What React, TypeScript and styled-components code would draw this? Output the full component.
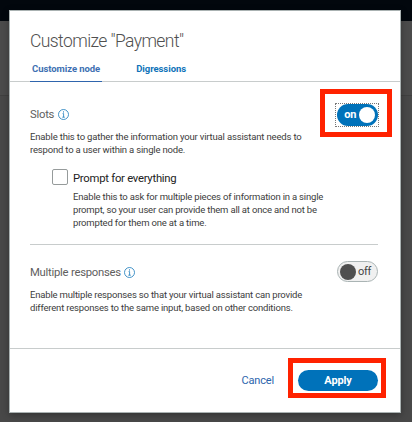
import React from 'react';
import styled, { createGlobalStyle } from 'styled-components';

const GlobalStyle = createGlobalStyle`
  * { box-sizing: border-box; }
  body {
    margin: 0;
    overflow: hidden;
    background: #4a4a4a;
    font-family: Roboto, "Liberation Sans", sans-serif;
  }
`;

const Page = styled.div`
  height: 422px;
  padding: 10px 11px 9px 9px;
  background: linear-gradient(#02070d 0 21px, #4b4b4b 21px 95px, #404040 95px 96px, #484848 96px);
`;

const Dialog = styled.section`
  position: relative;
  display: flex;
  flex-direction: column;
  width: 392px;
  height: 403px;
  border: 1px solid #aab2b2;
  background: #fff;
  box-shadow: 0 2px 7px rgba(0, 0, 0, 0.3);
`;

const Header = styled.header`
  height: 71px;
  padding: 18px 20px 0;
  border-bottom: 1px solid #c8cccc;
`;

const Title = styled.h1`
  margin: 0;
  font-size: 17.5px;
  font-weight: 300;
  line-height: 24px;
  letter-spacing: -0.58px;
  color: #505050;
`;

const Tabs = styled.nav`
  display: flex;
  gap: 32px;
  margin-top: 8px;
`;

const Tab = styled.button<{ $active?: boolean }>`
  height: 21px;
  padding: 0 2px 4px;
  border: 0;
  border-bottom: 1px solid ${(p) => (p.$active ? '#2f65ad' : 'transparent')};
  background: none;
  color: ${(p) => (p.$active ? '#3d70b2' : '#0f73b9')};
  font: 700 9.5px/16px Roboto, sans-serif;
  letter-spacing: -0.06px;
  white-space: nowrap;
`;

const Body = styled.main`
  flex: 1;
  padding: 21px 22px 0 20px;
`;

const Setting = styled.section`
  display: flex;
  justify-content: space-between;
`;

const SettingHeading = styled.h2`
  display: flex;
  align-items: center;
  gap: 3.5px;
  height: 20px;
  margin: 1px 0 6px;
  font-size: 11.3px;
  font-weight: 400;
  letter-spacing: -0.25px;
  color: #5e5e5e;
`;

const Text = styled.p`
  margin: 0;
  font-size: 9.5px;
  line-height: 13px;
  color: #3c3c3c;
`;

const Line = styled.span<{ $track?: number }>`
  display: block;
  white-space: nowrap;
  letter-spacing: ${(p) => p.$track ?? -0.18}px;
`;

const Option = styled.div`
  display: grid;
  grid-template-columns: 16px auto;
  column-gap: 5px;
  margin: 13px 0 0 22px;
`;

const Checkbox = styled.span`
  width: 16px;
  height: 16px;
  border: 1px solid #969b9b;
  border-radius: 2px;
`;

const OptionLabel = styled.label`
  height: 21px;
  font-size: 11.3px;
  line-height: 19px;
  letter-spacing: -0.26px;
  color: #222;
`;

const OptionText = styled(Text)`
  grid-column: 2;
`;

const Divider = styled.hr`
  height: 1px;
  margin: 15px 0 16px;
  border: 0;
  background: #c8cccc;
`;

const Switch = styled.button<{ $on?: boolean }>`
  display: flex;
  flex-direction: ${(p) => (p.$on ? 'row' : 'row-reverse')};
  align-items: center;
  justify-content: flex-end;
  gap: ${(p) => (p.$on ? 3 : 2)}px;
  width: 41px;
  height: ${(p) => (p.$on ? 22 : 21)}px;
  padding: 0 ${(p) => (p.$on ? 3 : 2)}px;
  border: ${(p) => (p.$on ? '0' : '1px solid #aab4b4')};
  border-radius: 11px;
  background: ${(p) => (p.$on ? '#0072ba' : '#f0f0f0')};
  color: ${(p) => (p.$on ? '#fff' : '#444')};
  font: ${(p) => (p.$on ? 700 : 400)} 11px/18px Roboto, sans-serif;
  letter-spacing: -0.35px;
`;

const OffSwitch = styled(Switch)`
  justify-content: flex-end;
`;

const FocusRing = styled.div`
  align-self: flex-start;
  width: 44px;
  height: 24px;
  margin-right: -1px;
  padding: 0 0 0 1px;
  border: 1px dotted #777;
`;

const Knob = styled.span<{ $on?: boolean }>`
  flex: none;
  width: 16px;
  height: 16px;
  border-radius: 50%;
  background: ${(p) => (p.$on ? '#fff' : '#4f4f4f')};
`;

const Footer = styled.footer`
  display: flex;
  justify-content: flex-end;
  gap: 24px;
  height: 64px;
  padding: 21px 22px 0;
  border-top: 1px solid #c8cccc;
`;

const Action = styled.button<{ $primary?: boolean }>`
  width: ${(p) => (p.$primary ? '80px' : 'auto')};
  height: 21px;
  padding: 0;
  border: 0;
  border-radius: 11px;
  background: ${(p) => (p.$primary ? '#0072ba' : 'none')};
  color: ${(p) => (p.$primary ? '#fff' : '#2b65ad')};
  font: ${(p) => (p.$primary ? 700 : 400)} 11px/21px Roboto, sans-serif;
  letter-spacing: -0.15px;
`;

const Highlight = styled.div<{ $x: number; $y: number; $w: number; $h: number }>`
  position: absolute;
  left: ${(p) => p.$x}px;
  top: ${(p) => p.$y}px;
  width: ${(p) => p.$w}px;
  height: ${(p) => p.$h}px;
  border: 5px solid #ff2200;
  pointer-events: none;
`;

const InfoIcon = () => (
  <svg width="11" height="11" viewBox="0 0 11 11" fill="none" stroke="#1779ba" strokeWidth="0.8">
    <circle cx="5.5" cy="5.5" r="5" />
    <path d="M4.6 4.6h1v3.6M4.3 8.2h2.5" />
    <path d="M5.5 2.4v1.1" strokeWidth="1" />
  </svg>
);

export default function App() {
  return (
    <>
      <GlobalStyle />
      <Page>
        <Dialog>
          <Header>
            <Title>Customize "Payment"</Title>
            <Tabs>
              <Tab $active>Customize node</Tab>
              <Tab>Digressions</Tab>
            </Tabs>
          </Header>
          <Body>
            <Setting>
              <div>
                <SettingHeading>
                  Slots <InfoIcon />
                </SettingHeading>
                <Text>
                  <Line $track={-0.165}>Enable this to gather the information your virtual assistant needs to</Line>
                  <Line>respond to a user within a single node.</Line>
                </Text>
              </div>
              <FocusRing>
                <Switch $on>
                  on
                  <Knob $on />
                </Switch>
              </FocusRing>
            </Setting>
            <Option>
              <Checkbox />
              <OptionLabel>Prompt for everything</OptionLabel>
              <OptionText>
                <Line $track={-0.19}>Enable this to ask for multiple pieces of information in a single</Line>
                <Line $track={-0.18}>prompt, so your user can provide them all at once and not be</Line>
                <Line>prompted for them one at a time.</Line>
              </OptionText>
            </Option>
            <Divider />
            <Setting>
              <div>
                <SettingHeading>
                  Multiple responses <InfoIcon />
                </SettingHeading>
                <Text>
                  <Line>Enable multiple responses so that your virtual assistant can provide</Line>
                  <Line>different responses to the same input, based on other conditions.</Line>
                </Text>
              </div>
              <OffSwitch>
                off
                <Knob />
              </OffSwitch>
            </Setting>
          </Body>
          <Footer>
            <Action>Cancel</Action>
            <Action $primary>Apply</Action>
          </Footer>
          <Highlight $x={310} $y={78} $w={72} $h={48} />
          <Highlight $x={278} $y={347} $w={98} $h={40} />
        </Dialog>
      </Page>
    </>
  );
}
